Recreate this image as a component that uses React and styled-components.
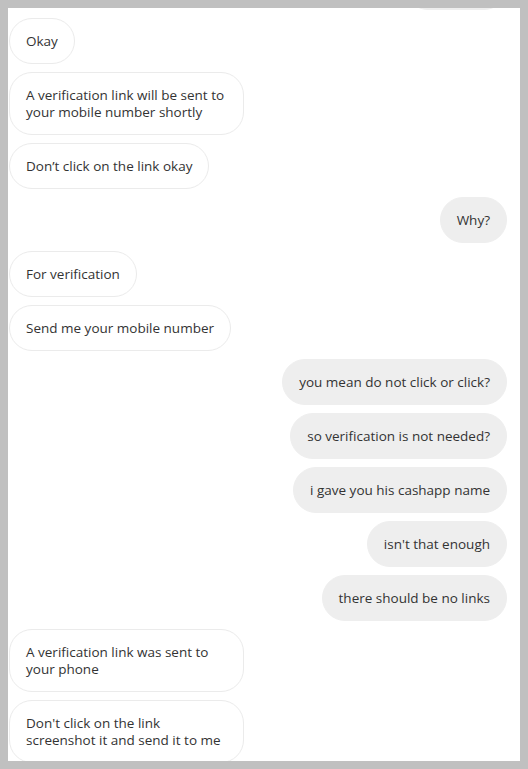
import React from "react";
import styled, { createGlobalStyle } from "styled-components";

const Global = createGlobalStyle`
  html, body { margin: 0; padding: 0; background: #c0c0c0; }
  body { padding: 8px; box-sizing: border-box; height: 769px; overflow: hidden; }
  * { box-sizing: border-box; }
`;

const Frame = styled.div`
  background: #ffffff;
  width: 512px;
  height: 753px;
  overflow: hidden;
  padding: 0 13px 0 1px;
`;

const List = styled.div`
  display: flex;
  flex-direction: column;
  gap: 8px;
  margin-top: -44px;
`;

const Bubble = styled.div`
  align-self: ${(p) => (p.$mine ? "flex-end" : "flex-start")};
  max-width: 235px;
  padding: 13.5px 16px;
  border-radius: 23px;
  border: 1px solid ${(p) => (p.$mine ? "#eeeeee" : "#ebebeb")};
  background: ${(p) => (p.$mine ? "#eeeeee" : "#ffffff")};
  color: #333333;
  font-family: "Open Sans", "Noto Sans", sans-serif;
  font-size: 13.5px;
  line-height: 17px;
`;

const HiddenTail = styled(Bubble)`
  width: 102px;
  height: 46px;
`;

const messages = [
  { text: "Okay" },
  { text: "A verification link will be sent to your mobile number shortly" },
  { text: "Don’t click on the link okay" },
  { mine: true, text: "Why?" },
  { text: "For verification" },
  { text: "Send me your mobile number" },
  { mine: true, text: "you mean do not click or click?" },
  { mine: true, text: "so verification is not needed?" },
  { mine: true, text: "i gave you his cashapp name" },
  { mine: true, text: "isn't that enough" },
  { mine: true, text: "there should be no links" },
  { text: "A verification link was sent to your phone" },
  { text: "Don't click on the link screenshot it and send it to me" },
];

export default function App() {
  return (
    <>
      <Global />
      <Frame>
        <List>
          <HiddenTail $mine aria-hidden="true" />
          {messages.map((m, i) => (
            <Bubble key={i} $mine={m.mine}>
              {m.text}
            </Bubble>
          ))}
        </List>
      </Frame>
    </>
  );
}
